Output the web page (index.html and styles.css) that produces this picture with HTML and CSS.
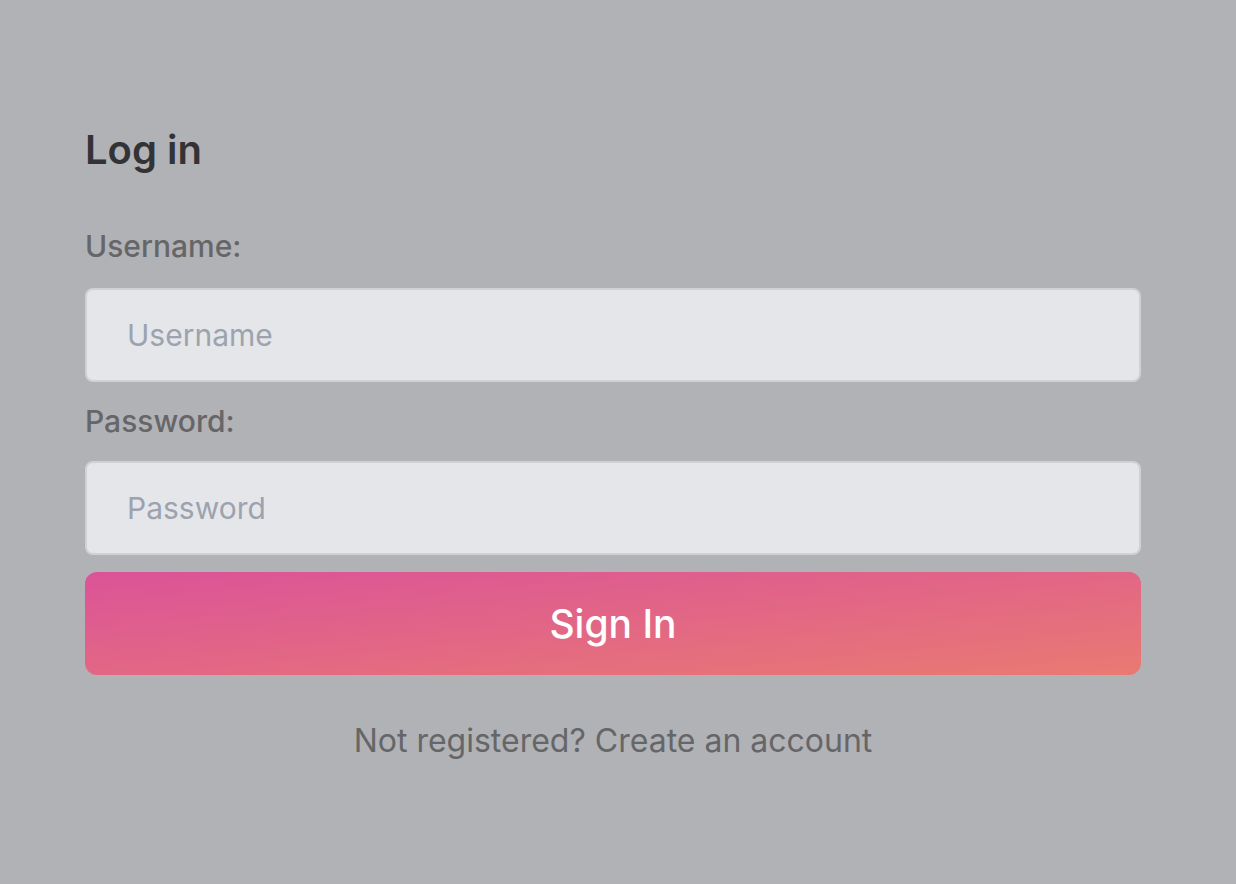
FILE: index.html
```html
<!DOCTYPE html>
<html>
<head>
<meta charset="utf-8">
<link rel="stylesheet" href="styles.css">
</head>
<body>
<div class="page">
  <form class="login">
    <h1 class="title">Log in</h1>
    <label class="label" for="u">Username:</label>
    <input class="field" id="u" type="text" placeholder="Username">
    <label class="label label-tight" for="p">Password:</label>
    <input class="field field-last" id="p" type="password" placeholder="Password">
    <button class="submit" type="button">Sign In</button>
    <p class="footer">Not registered? Create an account</p>
  </form>
</div>
</body>
</html>
```
FILE: styles.css
```css
html, body {
  margin: 0;
  padding: 0;
  background: #b1b2b6;
  height: 100%;
}
.page {
  padding: 126px 95px 0 85px;
  font-family: Inter, "Noto Sans", sans-serif;
}
.login {
  display: flex;
  flex-direction: column;
}
.title {
  margin: 0 0 54px;
  font-size: 40px;
  font-weight: 600;
  color: #333336;
  line-height: 48px;
}
.label {
  font-size: 30px;
  font-weight: 500;
  color: #666668;
  line-height: 36px;
  margin-bottom: 24px;
}
.label-tight {
  margin-bottom: 22px;
}
.field {
  box-sizing: border-box;
  height: 94px;
  border: 2px solid #d0d1d5;
  border-radius: 8px;
  background: #e5e6ea;
  padding: 0 40px;
  font-family: inherit;
  font-size: 30px;
  color: #333;
  margin-bottom: 21px;
  outline: none;
}
.field::placeholder {
  color: #9ca3af;
}
.field-last {
  margin-bottom: 17px;
}
.submit {
  height: 103px;
  border: none;
  border-radius: 12px;
  background: linear-gradient(to bottom right, #db5398 0%, #e97a72 100%);
  color: #fff;
  font-family: inherit;
  font-size: 39px;
  font-weight: 500;
}
.footer {
  margin: 46px 0 0;
  text-align: center;
  font-size: 32px;
  color: #666668;
  line-height: 40px;
}
```
